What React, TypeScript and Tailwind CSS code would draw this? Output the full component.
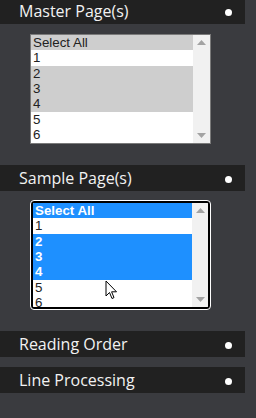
import React from "react";

const rows = ["Select All", "1", "2", "3", "4", "5", "6"];
const sel = [true, false, true, true, true, false, false];

function Header({ title, first }: { title: string; first?: boolean }) {
  return (
    <div
      className={`w-[245px] h-[26px] bg-[#212121] flex items-center justify-between pl-[19px] pr-[13px] ${first ? "-mt-[2px]" : ""}`}
    >
      <span className="text-[16px] font-medium text-[#f2f2f2] leading-[26px]" style={{ fontFamily: "'Open Sans', 'Noto Sans', sans-serif" }}>
        {title}
      </span>
      <span className="w-[7px] h-[7px] rounded-full bg-white mt-[2px]" />
    </div>
  );
}

function Arrow({ up }: { up?: boolean }) {
  return (
    <svg width="9" height="5" viewBox="0 0 9 5" className="block">
      {up ? <polygon points="0,5 9,5 4.5,0" fill="#a3a3a3" /> : <polygon points="0,0 9,0 4.5,5" fill="#a3a3a3" />}
    </svg>
  );
}

function ListBox({ focused }: { focused?: boolean }) {
  return (
    <div
      className={
        focused
          ? "ml-[31px] w-[179px] h-[108px] border-2 border-black rounded-[3px] outline outline-1 outline-white bg-white flex overflow-hidden"
          : "ml-[30px] w-[181px] h-[110px] border border-[#7a7a7a] bg-white flex overflow-hidden"
      }
      style={{ fontFamily: "'Liberation Sans', Arial, sans-serif" }}
    >
      <div className="flex-1 flex flex-col">
        {rows.map((r, i) => (
          <div
            key={r}
            className={`h-[15.33px] leading-[15.33px] text-[13.33px] pl-[2px] ${
              sel[i]
                ? focused
                  ? "bg-[#1e90ff] text-white font-bold"
                  : "bg-[#cecece] text-[#222]"
                : "bg-white text-[#222]"
            }`}
          >
            {r}
          </div>
        ))}
      </div>
      <div className={`${focused ? "w-[16px]" : "w-[17px]"} bg-[#f1f1f1] flex flex-col items-center justify-between py-[5px]`}>
        <Arrow up />
        <Arrow />
      </div>
    </div>
  );
}

export default function App() {
  return (
    <div className="w-[256px] h-[418px] bg-[#3a3b3f] overflow-hidden relative">
      <Header title="Master Page(s)" first />
      <div className="mt-[10px]">
        <ListBox />
      </div>
      <div className="mt-[21px]">
        <Header title="Sample Page(s)" />
      </div>
      <div className="mt-[10px]">
        <ListBox focused />
      </div>
      <div className="mt-[22px]">
        <Header title="Reading Order" />
      </div>
      <div className="mt-[10px]">
        <Header title="Line Processing" />
      </div>
      <svg
        className="absolute left-[105px] top-[280px]"
        width="14"
        height="21"
        viewBox="0 0 14 21"
      >
        <path d="M1 1 L1 16 L4.5 12.5 L7 18.5 L9 17.6 L6.6 11.8 L11.5 11.8 Z" fill="white" stroke="black" strokeWidth="1" strokeLinejoin="miter" />
      </svg>
    </div>
  );
}
